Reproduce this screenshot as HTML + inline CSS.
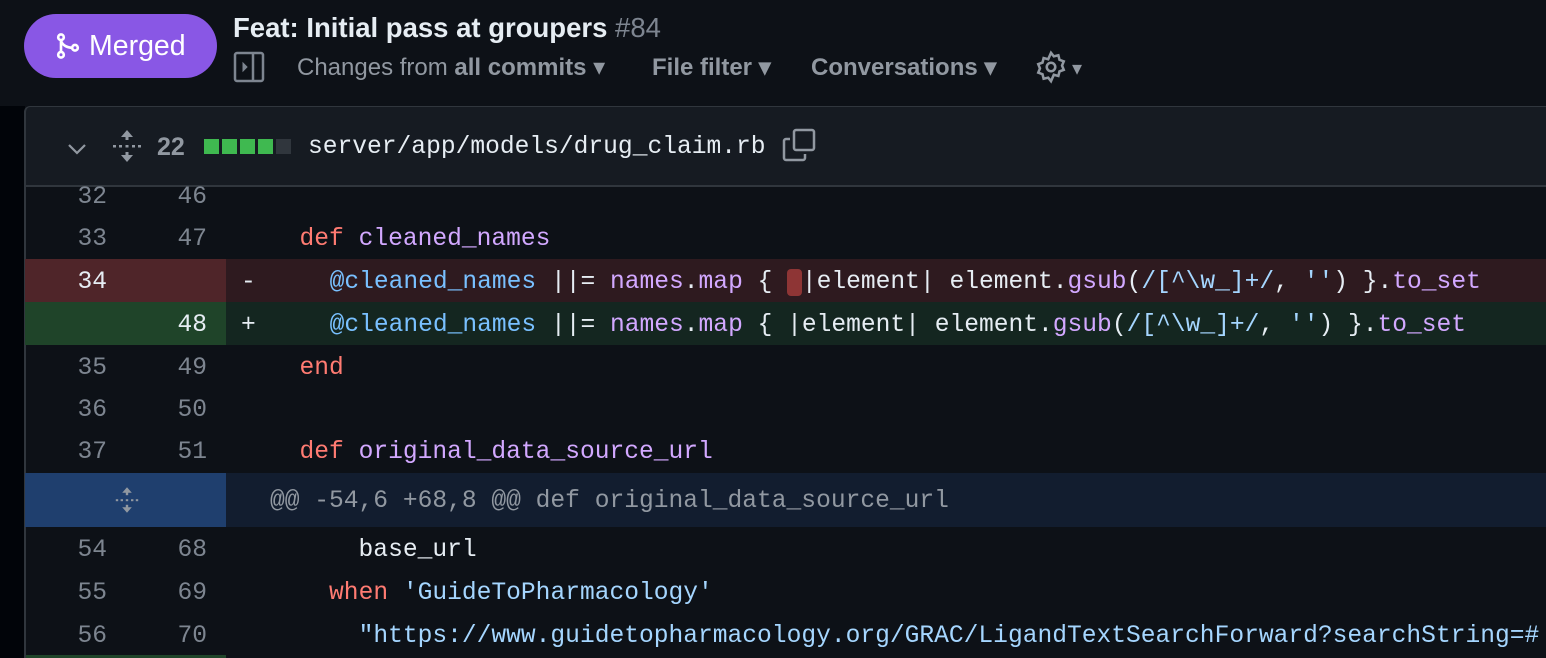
<!DOCTYPE html>
<html><head><style>
*{margin:0;padding:0;box-sizing:border-box}
body{width:1546px;height:658px;overflow:hidden;background:#0d1117;font-family:"Liberation Sans",sans-serif;position:relative}
.a{position:absolute}
.m{font-family:"Liberation Mono",monospace;font-size:24.6px;white-space:pre}
.row{position:absolute;left:25px;right:0;height:43px}
.ln{position:absolute;top:2px;height:100%;width:100px;text-align:right;color:#7d8590;line-height:43px}
.o{left:0;width:82px}.n{left:100px;width:82px}
.c{position:absolute;top:2px;left:245px;line-height:43px;color:#e6edf3}
.k{color:#ff7b72}.f{color:#d2a8ff}.v{color:#79c0ff}.s{color:#a5d6ff}
</style></head><body>
<div class="a" style="left:0;top:106px;width:25px;height:552px;background:#010409"></div>
<div class="a" style="left:24px;top:14px;width:193px;height:64px;border-radius:32px;background:#8957e5;color:#fff;font-size:28.5px;line-height:64px">
<svg class="a" style="left:30px;top:17px" width="28" height="30" viewBox="0 0 16 16" fill="none" stroke="#fff" stroke-width="1.5"><circle cx="4" cy="3" r="1.6"/><circle cx="4" cy="13" r="1.6"/><circle cx="12" cy="9" r="1.6"/><path d="M4 4.6v6.8M4 5c1 3 4 4 6.4 4"/></svg>
<span class="a" style="left:65px;top:0">Merged</span></div>
<div class="a" style="left:233px;top:12px;font-size:27.5px;font-weight:bold;color:#e6edf3">Feat: Initial pass at groupers <span style="font-weight:normal;color:#7d8590">#84</span></div>
<svg class="a" style="left:233px;top:51px" width="32" height="32" viewBox="0 0 32 32" fill="none" stroke="#7d8590" stroke-width="2.5"><rect x="2" y="2" width="28" height="28" rx="2"/><path d="M20 2v28"/><path d="M10 12l4 4-4 4z" fill="#7d8590" stroke-width="1"/></svg>
<div class="a" style="left:297px;top:53px;font-size:24px;color:#9198a1">Changes from <b style="color:#9198a1">all commits</b> ▾</div>
<div class="a" style="left:652px;top:53px;font-size:24px;font-weight:bold;color:#9198a1">File filter ▾</div>
<div class="a" style="left:811px;top:53px;font-size:24px;font-weight:bold;color:#9198a1">Conversations ▾</div>
<svg class="a" style="left:1034px;top:50px" width="34" height="34" viewBox="0 0 24 24" fill="none" stroke="#9198a1" stroke-width="1.8"><circle cx="12" cy="12" r="3"/><path d="M12 2l2 2.5 3.2-.8.8 3.2L21 8l-1.2 3 1.2 3-3 1.1-.8 3.2-3.2-.8L12 22l-2-2.5-3.2.8-.8-3.2L3 16l1.2-3L3 10l3-1.1.8-3.2 3.2.8z"/></svg>
<div class="a" style="left:1072px;top:56px;font-size:20px;color:#9198a1">▾</div>
<div class="a" style="left:24px;top:106px;width:1522px;height:81px;background:#161b22;border-left:2px solid #30363d;border-top-left-radius:6px;border-top:1px solid #30363d;border-bottom:2px solid #30363d"></div>
<svg class="a" style="left:66px;top:141px" width="22" height="16" viewBox="0 0 22 16" fill="none" stroke="#9198a1" stroke-width="2.2"><path d="M3 4l8 8 8-8"/></svg>
<svg class="a" style="left:112px;top:130px" width="30" height="32" viewBox="0 0 30 32" fill="#9198a1"><path d="M15 0l-6 7h12z M15 32l-6-7h12z"/><rect x="13.5" y="5" width="3" height="5"/><rect x="13.5" y="22" width="3" height="5"/><rect x="1" y="15" width="3" height="2.5"/><rect x="7" y="15" width="3" height="2.5"/><rect x="13.5" y="15" width="3" height="2.5"/><rect x="20" y="15" width="3" height="2.5"/><rect x="26" y="15" width="3" height="2.5"/></svg>
<div class="a" style="left:157px;top:133px;font-size:25px;font-weight:bold;color:#9198a1">22</div>
<div class="a" style="left:204px;top:139px;width:15px;height:15px;background:#3fb950"></div>
<div class="a" style="left:222px;top:139px;width:15px;height:15px;background:#3fb950"></div>
<div class="a" style="left:240px;top:139px;width:15px;height:15px;background:#3fb950"></div>
<div class="a" style="left:258px;top:139px;width:15px;height:15px;background:#3fb950"></div>
<div class="a" style="left:276px;top:139px;width:15px;height:15px;background:#30363d"></div>
<div class="a m" style="left:308px;top:134px;color:#e6edf3">server/app/models/drug_claim.rb</div>
<svg class="a" style="left:782px;top:128px" width="34" height="34" viewBox="0 0 34 34" fill="none" stroke="#9198a1" stroke-width="2.5"><rect x="12" y="2" width="20" height="20" rx="2"/><path d="M8 11H4a2 2 0 0 0-2 2v17a2 2 0 0 0 2 2h17a2 2 0 0 0 2-2v-4"/></svg>
<div class="a" style="left:24px;top:187px;width:2px;height:471px;background:#30363d"></div>

<div class="row m" style="top:174px"><span class="ln o">32</span><span class="ln n">46</span></div>
<div class="row m" style="top:216px"><span class="ln o">33</span><span class="ln n">47</span><span class="c">  <span class="k">def</span> <span class="f">cleaned_names</span></span></div>
<div class="row m" style="top:259px;background:#2e1a1f"><div class="a" style="left:0;top:0;width:201px;height:43px;background:#4f2529"></div><span class="ln o" style="color:#e6edf3">34</span><span class="c" style="left:216px">-     <span class="v">@cleaned_names</span> ||= <span class="f">names</span>.<span class="f">map</span> { <span style="background:#8e3535;border-radius:4px"> </span>|element| element.<span class="f">gsub</span>(<span class="s">/[^\w_]+/</span>, <span class="s">''</span>) }.<span class="f">to_set</span></span></div>
<div class="row m" style="top:302px;background:#142620"><div class="a" style="left:0;top:0;width:201px;height:43px;background:#1f4429"></div><span class="ln n" style="color:#e6edf3">48</span><span class="c" style="left:216px">+     <span class="v">@cleaned_names</span> ||= <span class="f">names</span>.<span class="f">map</span> { |element| element.<span class="f">gsub</span>(<span class="s">/[^\w_]+/</span>, <span class="s">''</span>) }.<span class="f">to_set</span></span></div>
<div class="row m" style="top:345px"><span class="ln o">35</span><span class="ln n">49</span><span class="c">  <span class="k">end</span></span></div>
<div class="row m" style="top:387px"><span class="ln o">36</span><span class="ln n">50</span></div>
<div class="row m" style="top:429px"><span class="ln o">37</span><span class="ln n">51</span><span class="c">  <span class="k">def</span> <span class="f">original_data_source_url</span></span></div>
<div class="row m" style="top:473px;height:54px;background:#121d2f"><div class="a" style="left:0;top:0;width:201px;height:54px;background:#1f3f6e"></div>
<svg class="a" style="left:90px;top:11px" width="24" height="32" viewBox="0 0 30 32" fill="#9198a1"><path d="M15 0l-6 7h12z M15 32l-6-7h12z"/><rect x="13.5" y="5" width="3" height="5"/><rect x="13.5" y="22" width="3" height="5"/><rect x="1" y="15" width="3" height="2.5"/><rect x="7" y="15" width="3" height="2.5"/><rect x="13.5" y="15" width="3" height="2.5"/><rect x="20" y="15" width="3" height="2.5"/><rect x="26" y="15" width="3" height="2.5"/></svg>
<span class="c" style="top:2px;line-height:54px;color:#9198a1">@@ -54,6 +68,8 @@ def original_data_source_url</span></div>
<div class="row m" style="top:527px"><span class="ln o">54</span><span class="ln n">68</span><span class="c">      base_url</span></div>
<div class="row m" style="top:570px"><span class="ln o">55</span><span class="ln n">69</span><span class="c">    <span class="k">when</span> <span class="s">'GuideToPharmacology'</span></span></div>
<div class="row m" style="top:613px"><span class="ln o">56</span><span class="ln n">70</span><span class="c">      <span class="s">"https://www.guidetopharmacology.org/GRAC/LigandTextSearchForward?searchString=#</span></span></div>
<div class="a" style="left:26px;top:655px;width:200px;height:3px;background:#1f4429"></div>
</body></html>
